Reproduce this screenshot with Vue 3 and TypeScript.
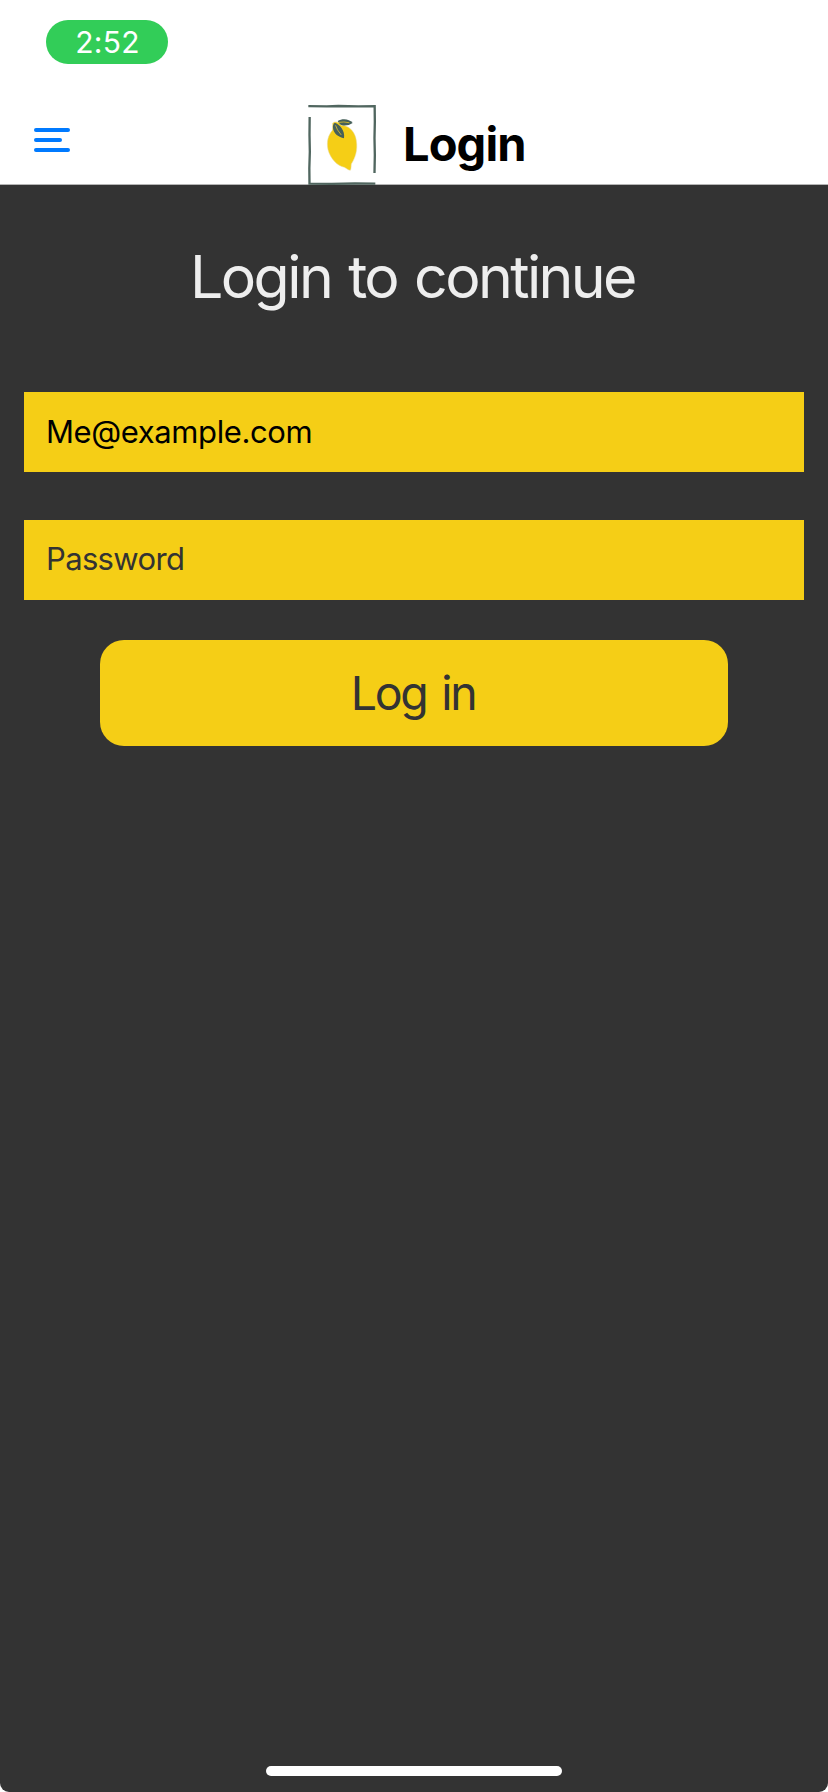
<script setup lang="ts">
import { ref } from 'vue'

const time = '2:52'
const email = ref<string>('Me@example.com')
const password = ref<string>('')
</script>

<template>
  <main class="screen">
    <div class="status"><span class="clock">{{ time }}</span></div>
    <header class="navbar">
      <button class="menu" aria-label="Menu" type="button">
        <span class="line"></span>
        <span class="line short"></span>
        <span class="line"></span>
      </button>
      <svg class="logo" viewBox="0 0 285 270" aria-hidden="true">
        <g fill="none" stroke="#50665f" stroke-width="7">
          <path d="M40 33.5 L95 34 L130 33 L190 34 L239 33.5 L239.500 80 L238.500 130 L239.500 180 L238.500 234" />
          <path d="M44 66 L43.500 120 L44.500 170 L43 220 L43.500 266 L110 266.500 L180 265.500 L241 266" />
        </g>
        <path
          d="M113 84 C120 78 132 80 139 91 C160 91 176 107 182 127 C189 154 186 181 169 207 C168 214 169 222 166 226 C160 226 155 220 148 217 C126 212 106 190 99 164 C94 140 99 122 112 106 Z"
          fill="#f5ce16"
          stroke="#e8dfaa"
          stroke-width="1.5"
        />
        <path d="M128 78 C142 70 162 71 173 84 C160 93 143 94 134 87 Z" fill="#46605a" />
        <path d="M119 83 C134 88 151 106 147 130 C132 127 115 116 114 99 C113 92 115 87 119 83 Z" fill="#46605a" />
        <path d="M132 82 Q146 79 162 83 M122 92 Q125 104 138 119" fill="none" stroke="#d8bd2b" stroke-width="2.5" stroke-linecap="round" />
      </svg>
      <h1 class="title">Login</h1>
    </header>
    <form class="content" @submit.prevent>
      <h2 class="heading">Login to continue</h2>
      <input v-model="email" class="field" type="text" aria-label="Email" />
      <input v-model="password" class="field password" type="password" placeholder="Password" />
      <button class="submit" type="submit">Log in</button>
      <div class="home"></div>
    </form>
  </main>
</template>

<style>
body {
  margin: 0;
  background: #fff;
}
</style>

<style scoped>
* {
  box-sizing: border-box;
}
.screen {
  display: flex;
  flex-direction: column;
  width: 828px;
  height: 1792px;
  overflow: hidden;
  background: #fff;
  font-family: Inter, "Liberation Sans", sans-serif;
}
.status {
  height: 96px;
  padding: 20px 46px;
}
.clock {
  display: flex;
  align-items: center;
  justify-content: center;
  width: 122px;
  height: 44px;
  padding-left: 1px;
  border-radius: 22px;
  background: #32cd58;
  color: #fff;
  font-size: 30px;
  letter-spacing: 0.2px;
}
.navbar {
  display: flex;
  align-items: flex-start;
  height: 89px;
  border-bottom: 1px solid #b5b5b5;
}
.menu {
  display: flex;
  flex-direction: column;
  gap: 6px;
  width: 36px;
  margin: 32px 0 0 34px;
  padding: 0;
  border: 0;
  background: none;
}
.line {
  width: 36px;
  height: 4px;
  border-radius: 2px;
  background: #007aff;
}
.short {
  width: 28px;
}
.logo {
  flex: none;
  width: 95px;
  height: 90px;
  margin: -1px 0 0 225px;
}
.title {
  margin: 18px 0 0 13px;
  color: #000;
  font-size: 47px;
  font-weight: 700;
  line-height: 60px;
  letter-spacing: -0.9px;
}
.content {
  display: flex;
  flex: 1;
  flex-direction: column;
  align-items: center;
  padding: 62px 24px 16px;
  border-radius: 0 0 9px 9px;
  background: #333;
}
.heading {
  margin: 0 0 85px;
  padding-right: 3px;
  color: #eee;
  font-size: 59px;
  font-weight: 400;
  line-height: 60px;
  letter-spacing: -2.6px;
  word-spacing: 3px;
  white-space: nowrap;
}
.field {
  width: 100%;
  height: 80px;
  margin: 0 0 48px;
  padding: 0 22px 2px;
  border: 0;
  border-radius: 0;
  outline: 0;
  background: #f5ce16;
  color: #000;
  font-family: inherit;
  font-size: 31px;
  letter-spacing: -0.4px;
}
.password {
  margin-bottom: 40px;
  padding-bottom: 4px;
  letter-spacing: -0.65px;
}
.field::placeholder {
  color: #333;
  opacity: 1;
}
.submit {
  width: 628px;
  height: 106px;
  padding: 0 2px 0 0;
  border: 0;
  border-radius: 24px;
  background: #f5ce16;
  color: #333;
  font-family: inherit;
  font-size: 46.500px;
  letter-spacing: -2.3px;
  word-spacing: 4px;
}
.home {
  width: 296px;
  height: 10px;
  margin-top: auto;
  border-radius: 5px;
  background: #fff;
}
</style>
